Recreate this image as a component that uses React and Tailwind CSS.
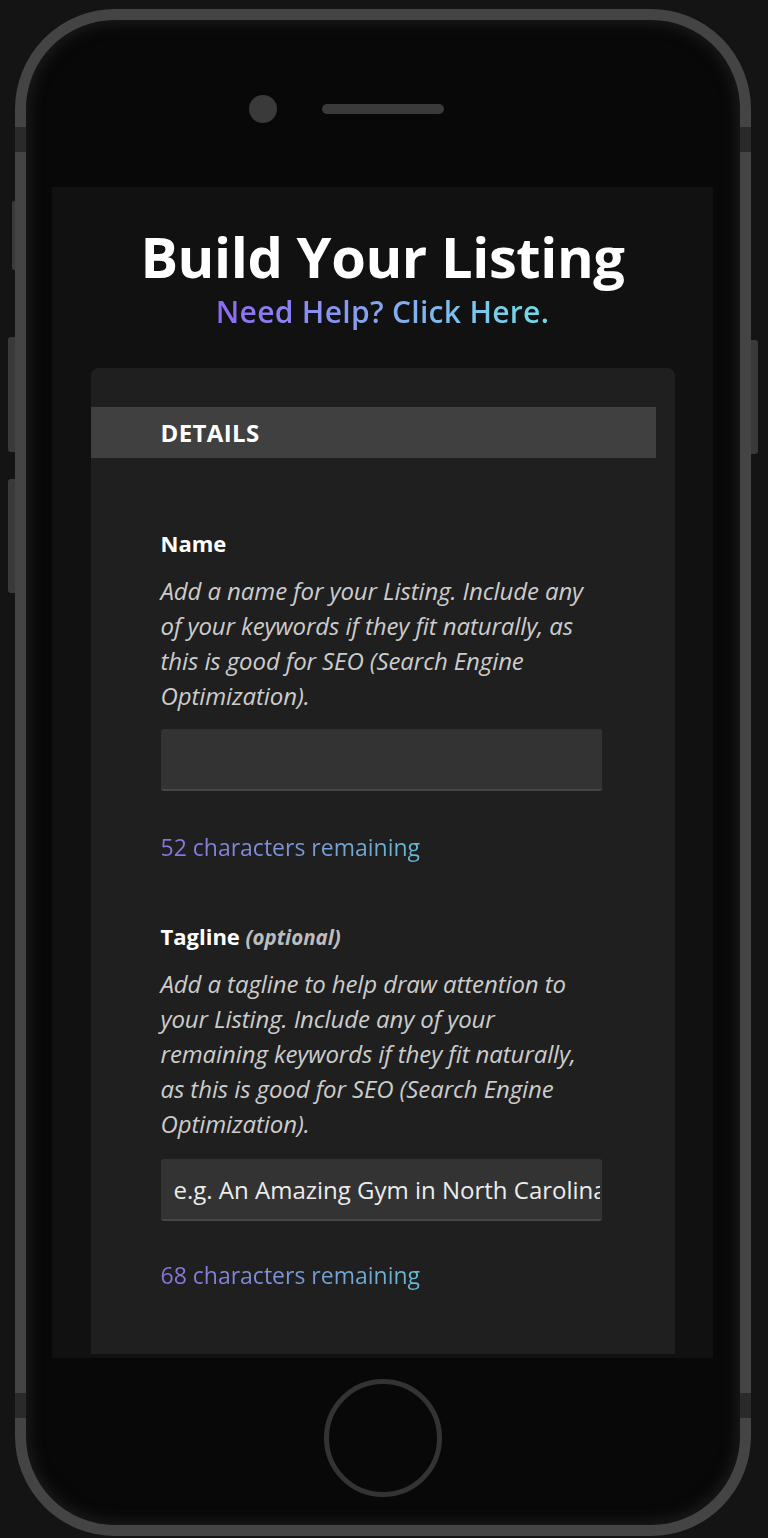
import React from "react";

const font = { fontFamily: '"Open Sans", "Noto Sans", sans-serif' };

function Remaining({ n }) {
  return (
    <div>
      <span className="text-[23px] leading-[30px] bg-linear-to-r from-[#8a72dc] to-[#63b9d2] bg-clip-text text-transparent">
        {n} characters remaining
      </span>
    </div>
  );
}

function Description({ lines }) {
  return (
    <p className="text-[24px] leading-[35px] italic text-[#cccccc] tracking-[-0.1px]">
      {lines.map((l, i) => (
        <span key={i} className="block whitespace-nowrap">{l}</span>
      ))}
    </p>
  );
}

function TextInput({ placeholder }) {
  return (
    <input
      className="block w-[441px] h-[62px] rounded-[3px] bg-[#333333] border-b-[2px] border-[#464646] pl-[13px] pr-[2px] text-[24px] text-white placeholder:text-[#ececec] outline-none"
      placeholder={placeholder}
      readOnly
    />
  );
}

export default function App() {
  return (
    <div className="relative w-[768px] h-[1538px] bg-[#141414] overflow-hidden pl-[15px] pt-[9px]" style={font}>
      {/* side buttons */}
      <div className="absolute left-[12px] top-[201px] w-[4px] h-[69px] rounded-l-[2px] bg-[#3a3a3a]" />
      <div className="absolute left-[8px] top-[337px] w-[8px] h-[115px] rounded-l-[3px] bg-[#3a3a3a]" />
      <div className="absolute left-[8px] top-[479px] w-[8px] h-[114px] rounded-l-[3px] bg-[#3a3a3a]" />
      <div className="absolute left-[750px] top-[340px] w-[8px] h-[114px] rounded-r-[3px] bg-[#3a3a3a]" />

      {/* phone */}
      <div className="relative w-[736px] h-[1527px] rounded-[100px] border-[11px] border-[#444444] bg-[#080808] shadow-[inset_0_0_14px_4px_#1b1b1b] flex flex-col">
        {/* antenna bands */}
        <div className="absolute -left-[11px] top-[107px] w-[11px] h-[25px] bg-[#2a2a2a]" />
        <div className="absolute -right-[11px] top-[107px] w-[11px] h-[25px] bg-[#2a2a2a]" />
        <div className="absolute -left-[11px] top-[1373px] w-[11px] h-[25px] bg-[#2a2a2a]" />
        <div className="absolute -right-[11px] top-[1373px] w-[11px] h-[25px] bg-[#2a2a2a]" />

        {/* camera + speaker */}
        <div className="flex items-center gap-[45px] pl-[223px] pt-[75px] h-[103px]">
          <div className="w-[28px] h-[28px] rounded-full bg-[#3a3a3a]" />
          <div className="w-[122px] h-[10px] rounded-full bg-[#3a3a3a]" />
        </div>

        {/* screen */}
        <div className="ml-[26px] mt-[64px] w-[661px] h-[1171px] bg-[#111111] overflow-hidden flex flex-col items-center pt-[39px]">
          <h1 className="text-[56px] leading-[60px] font-bold text-white tracking-[-0.4px]">Build Your Listing</h1>
          <div className="mt-[10px] text-[30px] leading-[32px] font-semibold tracking-[0.3px]">
            <span className="bg-linear-to-r from-[#8d68f2] to-[#6fdde6] bg-clip-text text-transparent">
              Need Help? Click Here.
            </span>
          </div>

          <div className="mt-[40px] w-[584px] h-[986px] shrink-0 rounded-t-[8px] bg-[#1f1f1f] pt-[39px]">
            <div className="w-[565px] h-[51px] bg-[#404040] flex items-center pl-[70px]">
              <span className="text-[24px] font-bold text-white tracking-[0.4px]">DETAILS</span>
            </div>

            <div className="pl-[70px] pt-[70px] flex flex-col">
              <div className="text-[22px] leading-[30px] font-bold text-white">Name</div>
              <div className="mt-[15px]">
                <Description
                  lines={[
                    "Add a name for your Listing. Include any",
                    "of your keywords if they fit naturally, as",
                    "this is good for SEO (Search Engine",
                    "Optimization).",
                  ]}
                />
              </div>
              <div className="mt-[16px]">
                <TextInput placeholder="" />
              </div>
              <div className="mt-[41px]">
                <Remaining n={52} />
              </div>

              <div className="mt-[59px] text-[22px] leading-[30px] font-bold text-white">
                Tagline <span className="text-[20.5px] italic font-bold text-[#bdbdbd]">(optional)</span>
              </div>
              <div className="mt-[14px]">
                <Description
                  lines={[
                    "Add a tagline to help draw attention to",
                    "your Listing. Include any of your",
                    "remaining keywords if they fit naturally,",
                    "as this is good for SEO (Search Engine",
                    "Optimization).",
                  ]}
                />
              </div>
              <div className="mt-[18px]">
                <TextInput placeholder="e.g. An Amazing Gym in North Carolina" />
              </div>
              <div className="mt-[39px]">
                <Remaining n={68} />
              </div>
            </div>
          </div>
        </div>

        {/* home button */}
        <div className="mx-auto mt-[21px] w-[118px] h-[118px] rounded-full border-[5px] border-[#333333]" />
      </div>
    </div>
  );
}
